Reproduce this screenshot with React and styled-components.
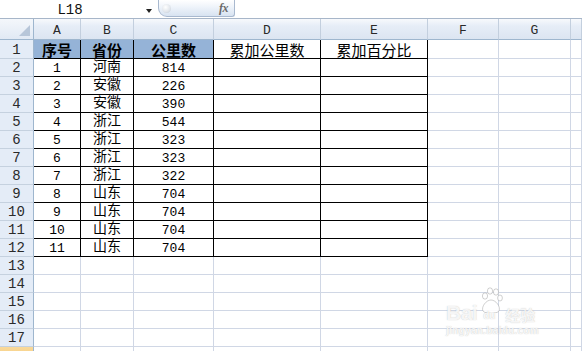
import React from "react";
import styled, { createGlobalStyle } from "styled-components";

const GlobalStyle = createGlobalStyle`
  html, body { margin: 0; padding: 0; background: #ffffff; overflow: hidden; }
  * { box-sizing: border-box; }
`;

const Window = styled.div`
  position: relative;
  width: 582px;
  height: 351px;
  overflow: hidden;
  background: #ffffff;
  font-family: "Liberation Mono", "Noto Sans CJK SC", monospace;
`;

const FormulaBar = styled.div`
  display: flex;
  align-items: stretch;
  height: 19px;
  border-bottom: 1px solid #a7b6c9;
  background: #ffffff;
`;

const NameBox = styled.div`
  width: 140px;
  display: flex;
  align-items: center;
  justify-content: center;
  font-family: "Liberation Mono", monospace;
  font-size: 14px;
  line-height: 1;
  color: #111;
  padding-top: 1px;
`;

const DropArrow = styled.div`
  width: 18px;
  display: flex;
  align-items: center;
  justify-content: center;
  &::after {
    content: "";
    display: block;
    border-left: 3.5px solid transparent;
    border-right: 3.5px solid transparent;
    border-top: 4px solid #222;
    margin-top: 3px;
  }
`;

const FxPill = styled.div`
  width: 77px;
  height: 17px;
  border: 1px solid #a9b9cf;
  border-top: none;
  border-radius: 0 0 3px 9px;
  background: linear-gradient(to bottom, #ffffff 0%, #eef3fa 45%, #d8e3f1 100%);
  display: flex;
  align-items: center;
  justify-content: space-between;
  padding: 0 6px 0 3px;
`;

const Knob = styled.div`
  width: 9px;
  height: 9px;
  border-radius: 50%;
  background: radial-gradient(circle at 40% 35%, #ffffff 0%, #dfe4ea 60%, #b9c3cf 100%);
  margin-top: 1px;
`;

const FxLabel = styled.span`
  font-family: "Liberation Serif", serif;
  font-style: italic;
  font-weight: bold;
  font-size: 12px;
  line-height: 1;
  color: #6b6b6b;
  letter-spacing: -0.5px;
`;

const FormulaInput = styled.div`
  flex: 1;
  background: #ffffff;
`;

const Sheet = styled.div`
  display: grid;
  grid-template-columns: 34px 47px 53px 80px 107px 107px 71px 72px 1fr;
  grid-template-rows: 21px 19px repeat(17, 18px);
`;

const Corner = styled.div`
  position: relative;
  background: linear-gradient(to bottom, #f4f7fb, #e1e9f4);
  border-right: 1px solid #9eb6ce;
  border-bottom: 1px solid #9eb6ce;
  &::after {
    content: "";
    position: absolute;
    right: 3px;
    bottom: 3px;
    width: 0;
    height: 0;
    border-left: 11px solid transparent;
    border-bottom: 11px solid #b7c6d9;
  }
`;

const ColHead = styled.div`
  background: linear-gradient(to bottom, #f7f9fc 0%, #e6edf7 35%, #dce5f1 100%);
  border-right: 1px solid #c3cfde;
  border-bottom: 1px solid #9eb6ce;
  display: flex;
  align-items: center;
  justify-content: center;
  font-family: "Liberation Mono", monospace;
  font-size: 13px;
  line-height: 1;
  color: #2a2a2a;
  padding-top: 3px;
`;

const RowHead = styled.div`
  background: ${(p) =>
    p.$active ? "linear-gradient(to bottom, #f9d99b, #f7c96f)" : "#e4ecf7"};
  border-right: 1px solid #9eb6ce;
  border-bottom: 1px solid #c5d1df;
  display: flex;
  align-items: center;
  justify-content: center;
  font-family: "Liberation Mono", monospace;
  font-size: 14px;
  line-height: 1;
  color: #2a2a2a;
  padding-top: 1px;
`;

const Cell = styled.div`
  background: ${(p) => (p.$fill ? "#95b3d7" : "#ffffff")};
  border-right: 1px solid ${(p) => (p.$boxed ? "#000000" : "#d0d7e5")};
  border-bottom: 1px solid ${(p) => (p.$boxed ? "#000000" : "#d0d7e5")};
  display: flex;
  align-items: center;
  justify-content: center;
  white-space: nowrap;
  color: #000;
`;

const Text = styled.span`
  display: block;
  line-height: 1;
  font-family: ${(p) =>
    p.$num ? '"Liberation Mono", monospace' : '"Noto Sans CJK SC", sans-serif'};
  font-size: ${(p) => (p.$num ? "13px" : p.$small ? "14px" : "15px")};
  font-weight: ${(p) => (p.$bold ? 700 : 400)};
  margin-top: ${(p) => (p.$num ? "1px" : "0")};
  transform: translateY(${(p) => (p.$small ? "-3px" : "0")});
`;

const Watermark = styled.div`
  position: absolute;
  left: 446px;
  top: 283px;
  width: 110px;
  pointer-events: none;
  color: rgba(255, 255, 255, 0.85);
  text-shadow: 0 0 1px rgba(140, 140, 140, 0.55);
`;

const MarkTop = styled.div`
  display: flex;
  align-items: flex-end;
  gap: 2px;
  height: 40px;
`;

const MarkBai = styled.span`
  font-family: "Liberation Sans", sans-serif;
  font-size: 21px;
  font-weight: 700;
  line-height: 1;
  letter-spacing: -0.5px;
`;

const MarkPaw = styled.div`
  position: relative;
  width: 24px;
  height: 38px;
  margin-bottom: -2px;
`;

const MarkDu = styled.span`
  position: absolute;
  left: 4px;
  bottom: 4px;
  font-family: "Liberation Sans", sans-serif;
  font-size: 10px;
  font-weight: 700;
  color: rgba(255, 255, 255, 0.9);
`;

const MarkJy = styled.span`
  font-family: "Noto Sans CJK SC", sans-serif;
  font-size: 15px;
  font-weight: 700;
  line-height: 1;
  margin-bottom: 1px;
`;

const MarkUrl = styled.div`
  font-family: "Liberation Sans", sans-serif;
  font-size: 10px;
  font-weight: 700;
  letter-spacing: 0.3px;
  margin-top: 2px;
`;

const COLS = ["A", "B", "C", "D", "E", "F", "G", ""];

const DATA = [
  [1, "河南", 814],
  [2, "安徽", 226],
  [3, "安徽", 390],
  [4, "浙江", 544],
  [5, "浙江", 323],
  [6, "浙江", 323],
  [7, "浙江", 322],
  [8, "山东", 704],
  [9, "山东", 704],
  [10, "山东", 704],
  [11, "山东", 704],
];

function HeaderRow() {
  return (
    <>
      <RowHead>1</RowHead>
      <Cell $boxed $fill><Text $bold>序号</Text></Cell>
      <Cell $boxed $fill><Text $bold>省份</Text></Cell>
      <Cell $boxed $fill><Text $bold>公里数</Text></Cell>
      <Cell $boxed><Text>累加公里数</Text></Cell>
      <Cell $boxed><Text>累加百分比</Text></Cell>
      <Cell />
      <Cell />
      <Cell />
    </>
  );
}

function DataRow({ index, row }) {
  return (
    <>
      <RowHead>{index}</RowHead>
      <Cell $boxed><Text $num>{row[0]}</Text></Cell>
      <Cell $boxed><Text $small>{row[1]}</Text></Cell>
      <Cell $boxed><Text $num>{row[2]}</Text></Cell>
      <Cell $boxed />
      <Cell $boxed />
      <Cell />
      <Cell />
      <Cell />
    </>
  );
}

function EmptyRow({ index, active }) {
  return (
    <>
      <RowHead $active={active}>{active ? "" : index}</RowHead>
      {COLS.map((c, i) => (
        <Cell key={i} />
      ))}
    </>
  );
}

function Paw() {
  return (
    <svg width="24" height="26" viewBox="0 0 24 26" style={{ position: "absolute", left: 0, top: 0 }}>
      <g fill="rgba(255,255,255,0.9)" stroke="rgba(150,150,150,0.55)" strokeWidth="0.8">
        <ellipse cx="6" cy="9" rx="2.6" ry="3.2" />
        <ellipse cx="11" cy="4" rx="2.6" ry="3.2" />
        <ellipse cx="17" cy="5" rx="2.6" ry="3.2" />
        <ellipse cx="21" cy="11" rx="2.4" ry="3" />
        <path d="M12 13 C 7 13, 2 20, 4 24 C 6 27, 18 27, 20 24 C 22 20, 17 13, 12 13 Z" />
      </g>
    </svg>
  );
}

export default function App() {
  return (
    <Window>
      <GlobalStyle />
      <FormulaBar>
        <NameBox>L18</NameBox>
        <DropArrow />
        <FxPill>
          <Knob />
          <FxLabel>fx</FxLabel>
        </FxPill>
        <FormulaInput />
      </FormulaBar>
      <Sheet>
        <Corner />
        {COLS.map((c, i) => (
          <ColHead key={i}>{c}</ColHead>
        ))}
        <HeaderRow />
        {DATA.map((row, i) => (
          <DataRow key={i} index={i + 2} row={row} />
        ))}
        {[13, 14, 15, 16, 17, 18].map((n) => (
          <EmptyRow key={n} index={n} active={n === 18} />
        ))}
      </Sheet>
      <Watermark>
        <MarkTop>
          <MarkBai>Bai</MarkBai>
          <MarkPaw>
            <Paw />
            <MarkDu>du</MarkDu>
          </MarkPaw>
          <MarkJy>经验</MarkJy>
        </MarkTop>
        <MarkUrl>jingyan.baidu.com</MarkUrl>
      </Watermark>
    </Window>
  );
}
